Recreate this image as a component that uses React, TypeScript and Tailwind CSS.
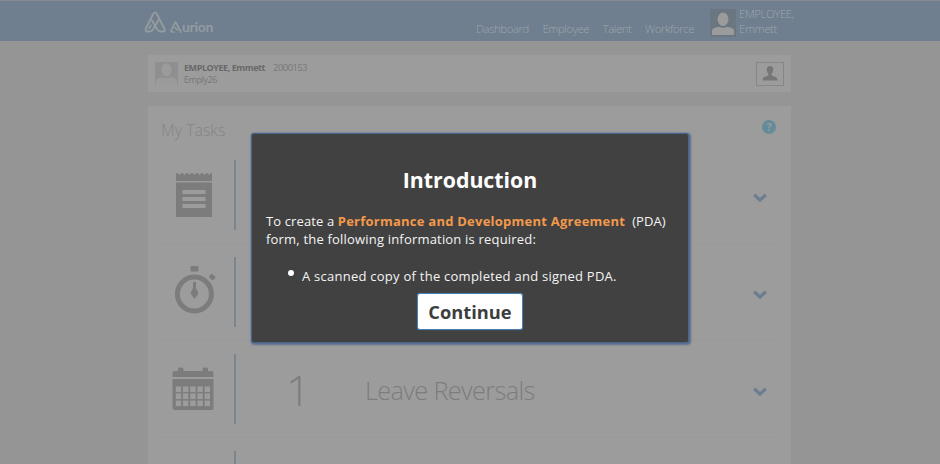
import React from "react";

function Logo() {
  return (
    <svg width="23" height="22" viewBox="0 0 23 22" fill="none" stroke="#949b9f" strokeWidth="1.9" strokeLinejoin="round" strokeLinecap="round">
      <path d="M7 14.5 5.2 17.2M9.2 3 1.8 17.5Q.8 20.5 3.5 20.5H5.5Q7.8 20.5 9 18.5L14.5 9M9.2 3Q11 -.3 12.8 3L20.4 17.5Q21.6 20.5 19 20.5H16.8Q14.5 20.5 13.4 18.5L7.6 9" />
    </svg>
  );
}

function Avatar({ size, bg, fg }: { size: number; bg: string; fg: string }) {
  return (
    <svg width={size} height={size} viewBox="0 0 24 24" className="shrink-0">
      <rect width="24" height="24" fill={bg} />
      <ellipse cx="12" cy="8.2" rx="5.4" ry="6.8" fill={fg} />
      <path d="M1 24V20Q1 17.5 4 16.7L8 15.8Q12 18 16 15.8L20 16.7Q23 17.5 23 20V24Z" fill={fg} />
    </svg>
  );
}

function NoteIcon() {
  return (
    <svg width="36" height="45" viewBox="0 0 36 45" className="ml-[28px]" fill="#7c7c7c">
      <path d="M0 1H1.5L3.5 3 5.5 1H6.5L8.5 3 10.5 1H11.5L13.5 3 15.5 1H16.5L18.5 3 20.5 1H21.5L23.5 3 25.5 1H26.5L28.5 3 30.5 1H31.5L33.5 3 35 1H36V9H0Z" />
      <path fillRule="evenodd" d="M0 10.5H36V45H0ZM6.5 18V22H29.5V18ZM6.5 25V29H29.5V25ZM6.5 32V36H29.5V32Z" />
    </svg>
  );
}

function TimerIcon() {
  return (
    <svg width="42" height="48" viewBox="0 0 42 48" className="-mt-[4px] ml-[26px]" fill="#7c7c7c">
      <circle cx="20.4" cy="28" r="17" fill="none" stroke="#7c7c7c" strokeWidth="5" />
      <rect x="16.5" y="0" width="8" height="5.5" rx="1" />
      <rect x="-2.8" y="-2.3" width="5.6" height="4.6" rx="1" transform="translate(38.2 11) rotate(42)" />
      <path d="M19 16H22V22Q22 23.5 23.7 25Q25 27 23.5 29L20.5 33L17.5 29Q16 27 17.3 25Q19 23.5 19 22Z" />
    </svg>
  );
}

function CalendarIcon() {
  return (
    <svg width="42" height="44" viewBox="0 0 42 44" className="ml-[24px]" fill="#7c7c7c">
      <path d="M.5 10V6Q.5 4 2.5 4H6V2Q6 .5 7.5 .5H10Q11.5 .5 11.5 2V4H30.5V2Q30.5 .5 32 .5H34.5Q36 .5 36 2V4H39.5Q41.5 4 41.5 6V10Z" />
      <path d="M.5 12H41.5V41Q41.5 43 39.5 43H2.5Q.5 43 .5 41Z" />
      {[19.5, 26.5, 33.5].map((y) =>
        [3.8, 11, 18.2, 25.4, 32.6].map((x) => (
          <rect key={`${x}-${y}`} x={x} y={y} width="5.4" height="5.6" fill="#9c9c9c" />
        ))
      )}
    </svg>
  );
}

function Chevron() {
  return (
    <svg width="14" height="10" viewBox="0 0 14 10" fill="none" stroke="#6b7e8f" strokeWidth="3.2">
      <path d="M1.2 1.8 7 7 12.8 1.8" />
    </svg>
  );
}

function TaskRow({ icon, count, label }: { icon: React.ReactNode; count?: string; label?: string }) {
  return (
    <div className="mx-3 flex h-[97px] shrink-0 items-start border-b border-[#999999] pt-[13px]">
      <div className="-ml-3 flex h-[69px] w-[86px] shrink-0 items-center">{icon}</div>
      <div className="h-[70px] w-[2px] shrink-0 bg-[#7a858e]" />
      <div className="flex h-[73px] w-[129px] shrink-0 items-center pl-[50px] text-[43px] font-light text-[#7c7c7c]">
        {count}
      </div>
      <div className="flex h-[74px] flex-1 items-center text-[25.3px] font-light tracking-[-0.65px] text-[#7c7c7c]">
        {label}
      </div>
      <div className="mr-[12px] flex h-[76px] items-center">
        <Chevron />
      </div>
    </div>
  );
}

export default function App() {
  return (
    <div className="relative h-[464px] w-[940px] overflow-hidden bg-[#959595] font-['Open_Sans','Noto_Sans',sans-serif]">
      <header className="flex h-[41px] border-t border-[#858b90] bg-[#6f7f8f] pl-[144px] text-[#9fa5aa]">
        <div className="flex w-[332px] pt-[10px]">
          <Logo />
          <div className="ml-[3px] mt-[7px] flex items-end self-start font-['Lato',sans-serif] text-[14px] font-bold leading-[18px] tracking-[-0.3px] text-[#949b9f]">
            <svg width="12" height="12" viewBox="0 0 12 12" className="mb-[3px]" fill="none" stroke="currentColor" strokeWidth="1.7" strokeLinecap="round" strokeLinejoin="round">
              <path d="M4 11H2Q.5 11 1.2 9.5L5 1.5Q5.5 .5 6 1.5L10.8 11M5 6.5 7.5 9" />
            </svg>
            <span>urion</span>
          </div>
        </div>
        <nav className="flex w-[234px] shrink-0 gap-[13.5px] whitespace-nowrap pt-[20px] text-[11.3px] font-light leading-[16px] tracking-[-0.38px]">
          <span>Dashboard</span>
          <span>Employee</span>
          <span>Talent</span>
          <span>Workforce</span>
        </nav>
        <div className="flex pt-[8px]">
          <div className="flex h-[28px] w-[26px] items-center justify-center bg-[#6b7780]">
            <Avatar size={24} bg="#6b7780" fg="#9b9b9b" />
          </div>
          <div className="ml-[3px] mt-[-2px] text-[11.3px] font-light leading-[14.5px] tracking-[-0.34px]">
            EMPLOYEE,
            <br />
            Emmett
          </div>
        </div>
      </header>

      <main className="mx-auto flex w-[644px] flex-col pt-[14px]">
        <section className="mr-[1px] flex h-[37px] shrink-0 items-center bg-[#9c9c9c] px-[7px]">
          <Avatar size={23} bg="#8f8f8f" fg="#9b9b9b" />
          <div className="ml-[6px] flex-1 text-[9px] leading-[12px] tracking-[-0.43px] text-[#777777]">
            <div>
              <span className="mr-[8px] font-bold text-[#686868]">EMPLOYEE, Emmett</span>
              <span className="text-[9.3px]">2000153</span>
            </div>
            <div>Emply26</div>
          </div>
          <div className="flex h-[24px] w-[28px] items-center justify-center border border-[#878787]">
            <svg width="16" height="15" viewBox="0 0 16 15" fill="#767676">
              <path d="M8 0Q11.3 0 11.2 3.5Q11 6.5 9.7 7.7V9.5Q11 10.3 13.8 11Q15.5 11.5 15.5 14.5H.5Q.5 11.5 2.2 11Q5 10.3 6.3 9.5V7.7Q5 6.5 4.8 3.5Q4.7 0 8 0Z" />
            </svg>
          </div>
        </section>

        <section className="mr-[1px] mt-[14px] flex h-[420px] flex-col bg-[#9c9c9c]">
          <div className="flex h-[41px] shrink-0 items-start justify-between pl-[13px] pr-[15px] pt-[13px] text-[15.9px] leading-[22px] text-[#858585]">
            <span className="font-light">My Tasks</span>
            <span className="mt-[1px] flex h-[14px] w-[14px] items-center justify-center rounded-full bg-[#638b99] text-[11px] font-bold leading-[14px] text-[#9c9c9c]">?</span>
          </div>
          <TaskRow icon={<NoteIcon />} />
          <TaskRow icon={<TimerIcon />} />
          <TaskRow icon={<CalendarIcon />} count="1" label="Leave Reversals" />
          <TaskRow icon={null} />
        </section>
      </main>

      <div className="absolute left-[251px] top-[133px] flex h-[210px] w-[438px] flex-col rounded-[3px] border border-[#48638e] bg-[#414141] px-[14px] text-[13px] leading-[18px] text-[#f4f4f4] shadow-[0_0_1px_#4d6894,1px_1px_2px_1px_#5c6f8c]">
        <h1 className="mt-[31px] text-center text-[21.3px] font-bold leading-[30px] text-white">Introduction</h1>
        <div className="mt-[17px] whitespace-nowrap tracking-[0.19px]">
          <span className="tracking-[0.12px]">To create a </span>
          <strong className="font-bold tracking-[0.24px] text-[#f3994c]">Performance and Development Agreement</strong>
          <span className="ml-[7px] tracking-[0.1px]">(PDA)</span>
          <br />
          <span>form, the following information is required:</span>
        </div>
        <div className="mt-[19px] flex items-start whitespace-nowrap">
          <span className="ml-[22px] mr-[9px] mt-[3px] h-[6px] w-[6px] shrink-0 rounded-full bg-white" />
          <span className="-ml-px tracking-[0.25px]">A scanned copy of the completed and signed PDA.</span>
        </div>
        <button className="ml-[151px] mt-[8px] h-[37px] w-[106px] rounded-[3px] border border-[#4a7fb5] bg-white pt-[1px] text-[18.3px] font-bold leading-[34px] text-[#3d3d3d] shadow-[0_0_1px_#4a7fb5]">
          Continue
        </button>
      </div>
    </div>
  );
}
